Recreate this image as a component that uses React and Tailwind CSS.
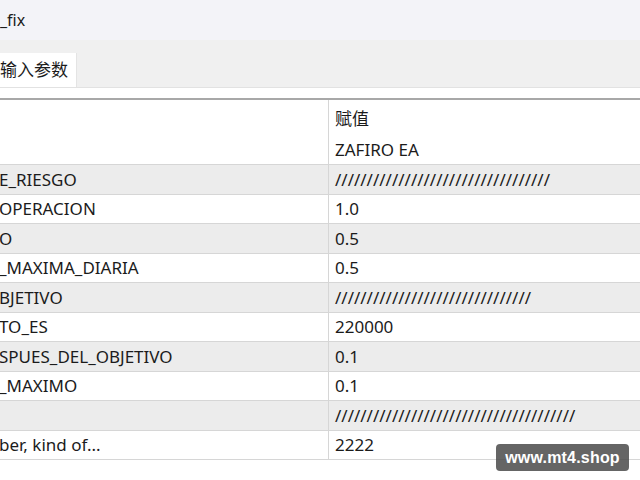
const rows = [
  ["E_RIESGO", "/".repeat(34), true],
  ["OPERACION", "1.0", false],
  ["O", "0.5", true],
  ["_MAXIMA_DIARIA", "0.5", false],
  ["BJETIVO", "/".repeat(31), true],
  ["TO_ES", "220000", false],
  ["SPUES_DEL_OBJETIVO", "0.1", true],
  ["_MAXIMO", "0.1", false],
  ["", "/".repeat(38), true],
  ["ber, kind of...", "2222", false],
];

export default function App() {
  return (
    <div
      className="relative w-[640px] h-[480px] overflow-hidden bg-white text-[#1b1b1b]"
      style={{ fontFamily: '"Noto Sans", "Noto Sans CJK SC", sans-serif' }}
    >
      <div className="h-[40px] bg-[#f3f3f8] flex items-center text-[16px]">
        <span>_fix</span>
      </div>
      <div className="h-[48px] bg-[#f0f0f0] flex items-end border-b border-[#e2e2e2]">
        <div className="h-[34px] w-[77px] bg-white border-r border-[#e4e4e4] flex items-center text-[17px]">
          <span className="whitespace-nowrap">输入参数</span>
        </div>
      </div>
      <div className="h-[12px] bg-white border-b-2 border-[#a8a8a8]" />
      <div className="flex h-[36px] bg-white text-[17px]">
        <div className="w-[329px] border-r border-[#d6d6d6]" />
        <div className="flex-1 flex items-center pl-[6px] pt-[2px]">赋值</div>
      </div>
      <div className="flex h-[29px] bg-white border-b border-[#d6d6d6] text-[17px]">
        <div className="w-[329px] border-r border-[#d6d6d6]" />
        <div className="flex-1 flex items-center pl-[6px]">ZAFIRO EA</div>
      </div>
      {rows.map(([name, value, shaded], i) => (
        <div
          key={i}
          className={
            "flex h-[29.5px] border-b border-[#d6d6d6] text-[17px] " +
            (shaded ? "bg-[#ececec]" : "bg-white")
          }
        >
          <div className="w-[329px] border-r border-[#d6d6d6] flex items-center overflow-hidden whitespace-nowrap">
            <span className="-ml-[1px]">{name}</span>
          </div>
          <div className="flex-1 flex items-center pl-[6px] whitespace-nowrap">
            {value}
          </div>
        </div>
      ))}
      <div
        className="absolute left-[496px] top-[444px] w-[133px] h-[27px] rounded-[4px] bg-[#4a4a4a]/85 flex items-center justify-center text-white text-[16px] font-semibold tracking-[0.2px]"
        style={{ fontFamily: '"Liberation Sans", Arial, sans-serif' }}
      >
        www.mt4.shop
      </div>
    </div>
  );
}
